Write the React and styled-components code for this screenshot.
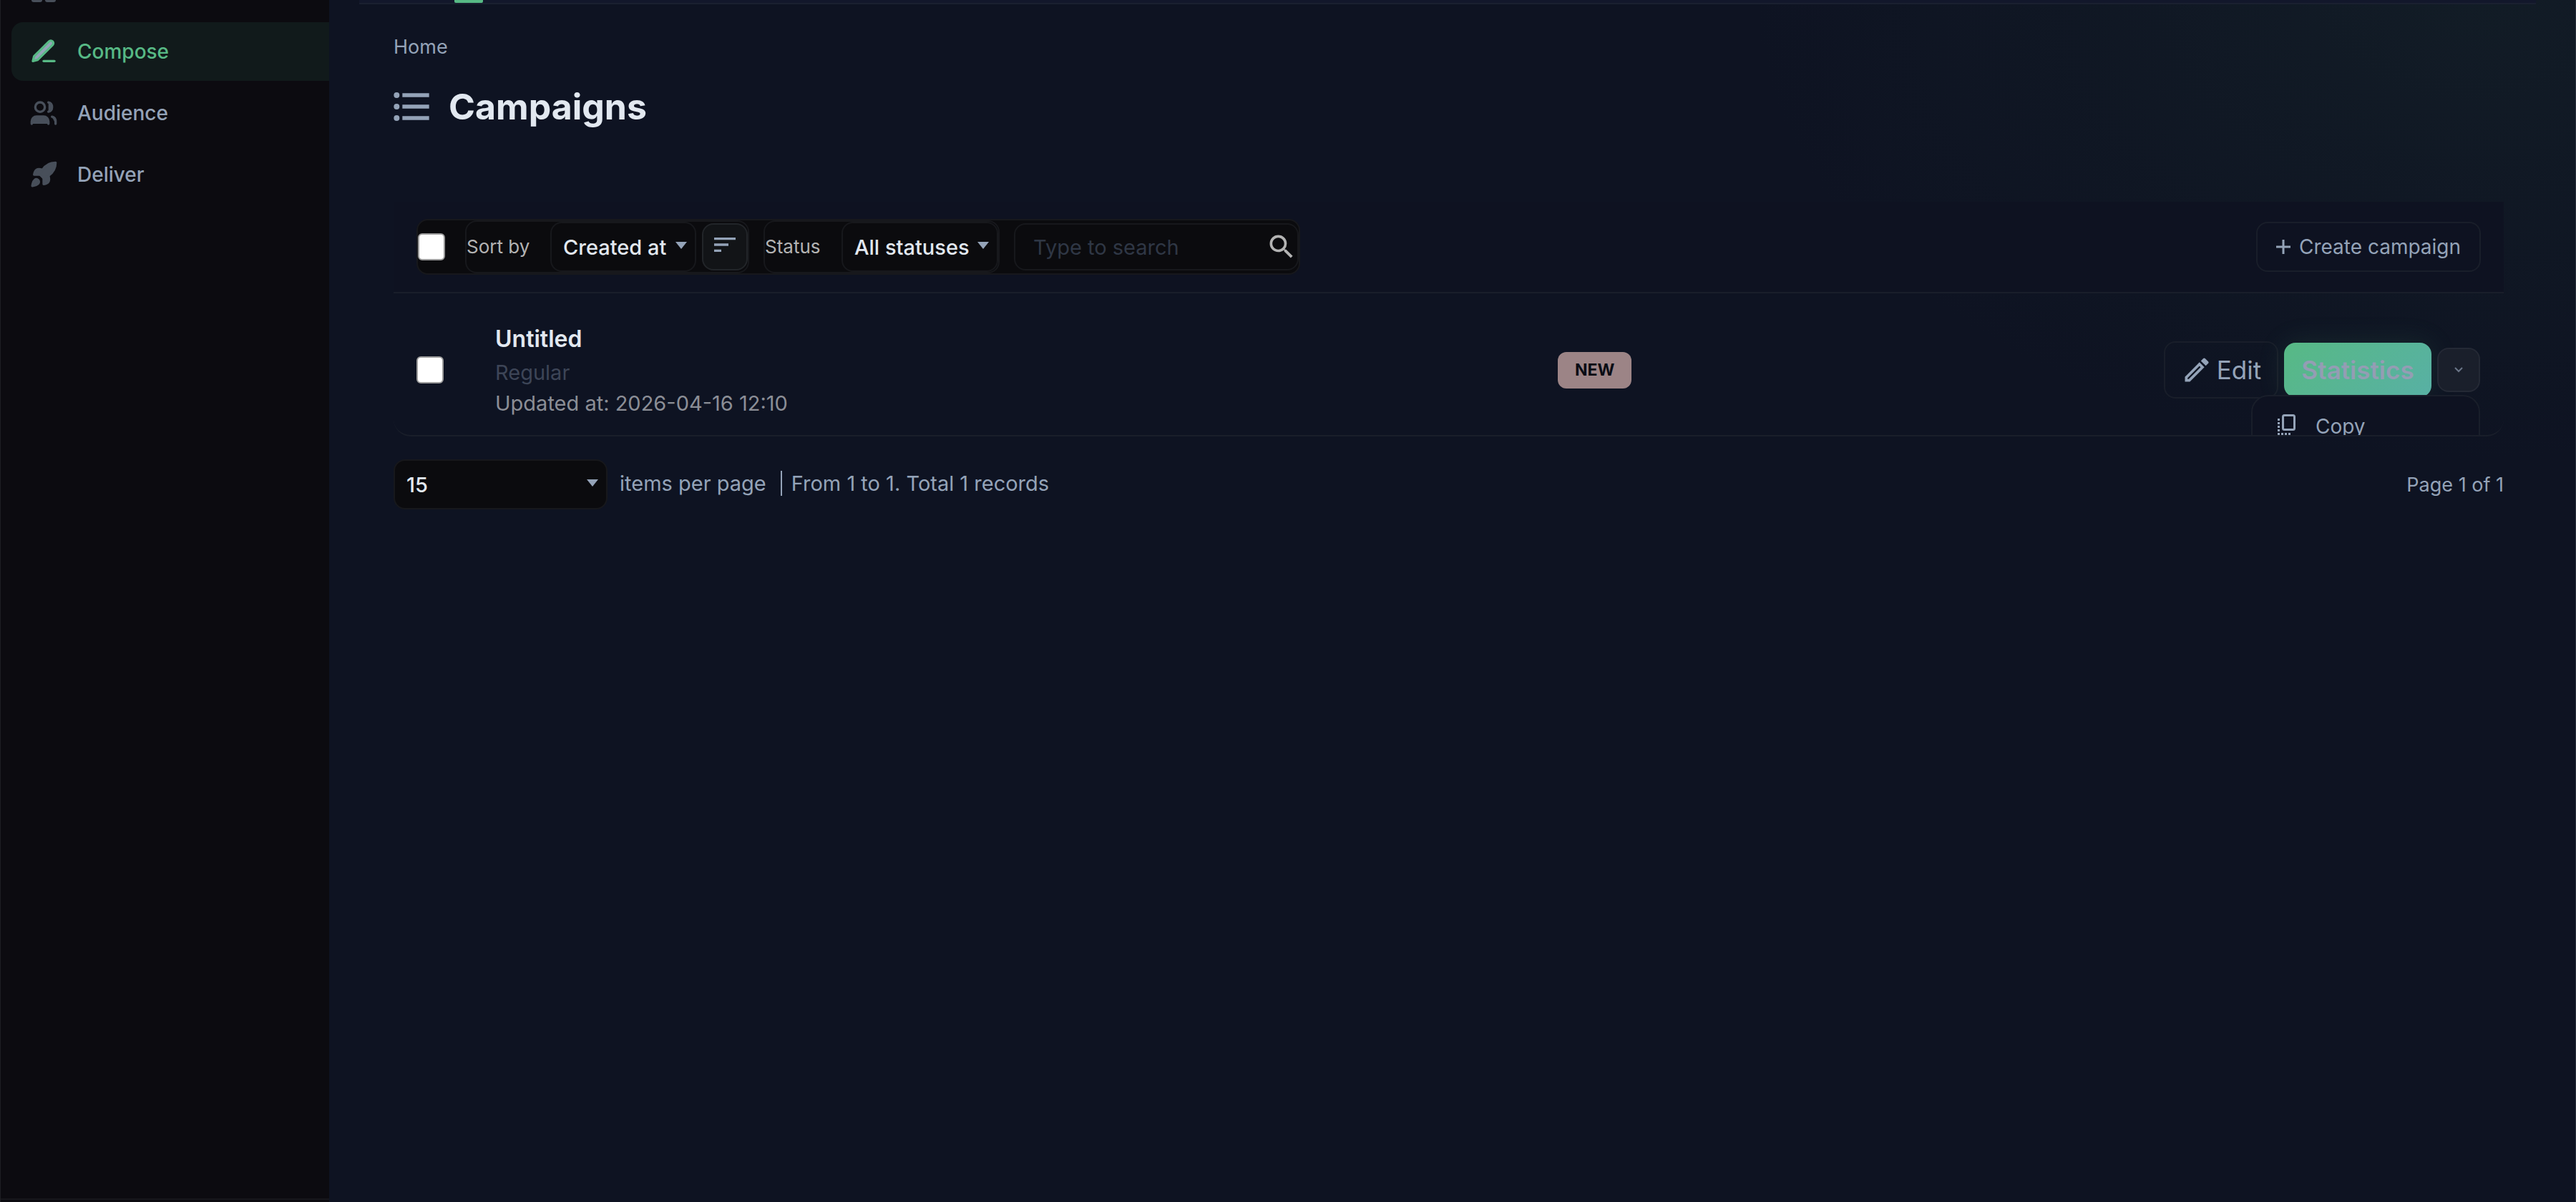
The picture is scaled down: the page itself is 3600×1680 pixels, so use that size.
import { MdOutlineEdit, MdSearch, MdSort } from 'react-icons/md'
import styled, { createGlobalStyle, ThemeProvider } from 'styled-components'

const theme = {
  colors: {
    page: '#0e1322',
    panel: '#0e1221',
    sidebar: '#0c0b10',
    field: '#0b0b0e',
    line: '#191e2a',
    fieldLine: '#17181c',
    text: '#e2e8f0',
    muted: '#94a3b8',
    neutral: '#b3b3b3',
    green: '#57b985',
  },
}

const GlobalStyle = createGlobalStyle`
  * {
    box-sizing: border-box;
  }
  body {
    margin: 0;
    background: ${theme.colors.page};
    color: ${theme.colors.muted};
    font-family: Inter, 'Liberation Sans', sans-serif;
    font-size: 29px;
  }
  button, input, select {
    font: inherit;
    margin: 0;
  }
`

const Layout = styled.div`
  display: flex;
  min-height: 100vh;
  border-right: 1px solid #2a303c;
  background: radial-gradient(ellipse 1000px 640px at 96% 0, #121c26, transparent);
`

const Sidebar = styled.nav`
  flex: 0 0 460px;
  padding-left: 15px;
  border-left: 1px solid #1e1f23;
  background: ${({ theme }) => theme.colors.sidebar};
  box-shadow: inset 0 -3px ${({ theme }) => theme.colors.sidebar}, inset 0 -5px #17171c;
`

const CutItem = styled.div`
  height: 31px;
  padding-left: 28px;

  svg {
    display: block;
  }
`

const NavLink = styled.a`
  display: flex;
  align-items: center;
  gap: 27px;
  height: 82px;
  margin-bottom: 4px;
  padding-left: 25px;
  border-radius: 16px 0 0 16px;
  font-size: 28px;
  font-weight: 500;
  text-decoration: none;
  color: ${({ theme, $active }) => ($active ? theme.colors.green : theme.colors.muted)};
  background: ${({ $active }) => ($active ? '#111a1b' : 'transparent')};

  svg {
    width: 40px;
    height: 40px;
    fill: ${({ theme, $active }) => ($active ? theme.colors.muted : '#484f5a')};
    stroke: ${({ theme, $active }) => ($active ? theme.colors.green : '#484f5a')};
    stroke-width: 2;
    stroke-linecap: round;
    stroke-linejoin: round;
  }
`

const Main = styled.main`
  flex: 1;
  min-width: 0;
  padding: 0 100px 0 90px;
`

const TopTabs = styled.div`
  height: 6px;
  margin: 0 -45px 0 -48px;
  padding-left: 133px;
  border-bottom: 2px solid #1a2030;
  background: #12172b;
`

const ActiveTab = styled.div`
  width: 40px;
  height: 4px;
  border-radius: 0 0 2px 2px;
  background: ${({ theme }) => theme.colors.green};
`

const Crumb = styled.a`
  display: block;
  width: max-content;
  margin-top: 42px;
  font-size: 27px;
  line-height: 36px;
  color: ${({ theme }) => theme.colors.muted};
  text-decoration: none;
`

const Heading = styled.div`
  display: flex;
  align-items: center;
  gap: 27px;
  margin: 32px 0 100px;

  h1 {
    margin: 0;
    font-size: 50px;
    font-weight: 700;
    line-height: 66px;
    color: ${({ theme }) => theme.colors.text};
  }
`

const Toolbar = styled.div`
  display: flex;
  justify-content: space-between;
  align-items: center;
  height: 128px;
  padding: 0 32px;
  border-bottom: 2px solid ${({ theme }) => theme.colors.line};
  background: ${({ theme }) => theme.colors.panel};
`

const FilterBar = styled.div`
  display: flex;
  align-items: center;
  height: 78px;
  border: 2px solid ${({ theme }) => theme.colors.fieldLine};
  border-radius: 16px;
  background: ${({ theme }) => theme.colors.field};
`

const Checkbox = styled.input.attrs({ type: 'checkbox' })`
  appearance: none;
  flex: none;
  width: 38px;
  height: 38px;
  border: 2px solid #9b9b9b;
  border-radius: 6px;
  background: #fff;
`

const FilterGroup = styled.div`
  display: flex;
  align-items: center;
  height: 74px;
  margin-left: ${({ $gap }) => $gap}px;
  border: 2px solid ${({ theme }) => theme.colors.fieldLine};
  border-radius: 16px;
`

const FilterLabel = styled.label`
  width: ${({ $width }) => $width}px;
  padding-bottom: 2px;
  font-size: 26px;
  color: ${({ theme }) => theme.colors.neutral};
`

const SelectBox = styled.div`
  position: relative;
  width: ${({ $width }) => $width}px;

  select {
    appearance: none;
    display: block;
    width: 100%;
    height: 70px;
    padding: 0 16px;
    border: 2px solid ${({ theme }) => theme.colors.fieldLine};
    border-radius: 16px;
    background: ${({ theme }) => theme.colors.field};
    color: ${({ theme }) => theme.colors.text};
    font-weight: 500;
  }

  svg {
    position: absolute;
    top: 28px;
    right: 13px;
    pointer-events: none;
    fill: ${({ theme }) => theme.colors.muted};
  }
`

const SortButton = styled.button`
  display: flex;
  align-items: center;
  justify-content: center;
  width: 64px;
  height: 66px;
  margin-left: 8px;
  padding: 0 0 6px;
  border: 2px solid #222529;
  border-radius: 16px;
  background: #121417;
  color: ${({ theme }) => theme.colors.muted};
`

const SearchBox = styled.label`
  display: flex;
  align-items: center;
  width: 398px;
  height: 66px;
  margin-left: 20px;
  border: 2px solid ${({ theme }) => theme.colors.fieldLine};
  border-radius: 16px;
  color: ${({ theme }) => theme.colors.neutral};

  input {
    flex: 1;
    min-width: 0;
    padding: 0 0 0 25px;
    border: 0;
    background: none;
    color: ${({ theme }) => theme.colors.text};
  }
  input::placeholder {
    color: #2f3745;
    opacity: 1;
  }
`

const OutlineButton = styled.button`
  display: flex;
  align-items: center;
  justify-content: center;
  gap: ${({ $large }) => ($large ? 6 : 12)}px;
  width: ${({ $large }) => ($large ? 160 : 314)}px;
  height: ${({ $large }) => ($large ? 80 : 70)}px;
  padding: 0;
  border: 2px solid ${({ theme }) => theme.colors.line};
  border-radius: 16px;
  background: transparent;
  color: ${({ theme }) => theme.colors.muted};
  font-size: ${({ $large }) => ($large ? 35 : 28)}px;
`

const Row = styled.article`
  position: relative;
  display: flex;
  align-items: center;
  height: 200px;
  padding: 16px 33px 0 32px;
  overflow: hidden;
  border-bottom: 2px solid ${({ theme }) => theme.colors.line};
  border-radius: 24px;
`

const Info = styled.div`
  flex: 1;
  margin-left: 72px;
  line-height: 43px;

  h2 {
    margin: 0;
    font-size: 32px;
    font-weight: 600;
    line-height: 50px;
    color: ${({ theme }) => theme.colors.text};
  }
  p {
    margin: 0;
  }
`

const Kind = styled.p`
  color: #3d4557;
`

const Updated = styled.p`
  color: #8b8e96;
`

const StatusCell = styled.div`
  flex: 0 0 847px;
`

const Badge = styled.span`
  display: inline-block;
  padding: 0 24px;
  border-radius: 12px;
  background: #9c8486;
  color: #090c14;
  font-size: 23px;
  font-weight: 700;
  line-height: 51px;
`

const Actions = styled.div`
  display: flex;
  align-items: center;
  gap: 8px;
`

const PrimaryButton = styled.button`
  width: 206px;
  height: 76px;
  padding: 0;
  border: 0;
  border-radius: 16px;
  background: linear-gradient(135deg, #57b985, #58b0a4);
  box-shadow: 0 0 40px rgba(87, 185, 133, 0.12);
  color: #949db4;
  font-size: 35px;
  font-weight: 600;
`

const ToggleButton = styled.button`
  display: flex;
  align-items: center;
  justify-content: center;
  width: 60px;
  height: 62px;
  padding: 0;
  border: 2px solid #242935;
  border-radius: 16px;
  background: #1a1f2b;
  color: #6b7688;
`

const Menu = styled.div`
  position: absolute;
  top: 142px;
  right: 33px;
  width: 320px;
  padding: 16px 0;
  border: 2px solid ${({ theme }) => theme.colors.line};
  border-radius: 24px;
  background: ${({ theme }) => theme.colors.panel};
`

const MenuItem = styled.button`
  display: flex;
  align-items: center;
  gap: 27px;
  width: 100%;
  height: 52px;
  padding: 0 35px;
  border: 0;
  background: none;
  color: ${({ theme }) => theme.colors.muted};
  font-size: 28px;
`

const Footer = styled.footer`
  display: flex;
  align-items: center;
  margin-top: 32px;
`

const Summary = styled.div`
  display: flex;
  align-items: center;
  padding: 0 0 4px 17px;
`

const Records = styled.span`
  margin-left: 20px;
  padding-left: 13px;
  border-left: 2px solid ${({ theme }) => theme.colors.muted};
`

const PageInfo = styled.span`
  margin-left: auto;
  font-size: 27px;
`

function Caret() {
  return (
    <svg width='16' height='10' viewBox='0 0 16 10'>
      <path d='M0 0h16L8 10z' />
    </svg>
  )
}

function ListIcon() {
  return (
    <svg width='50' height='40' viewBox='2.5 4.5 18.5 15' fill={theme.colors.muted}>
      <circle cx='4' cy='6' r='1.5' />
      <circle cx='4' cy='12' r='1.5' />
      <circle cx='4' cy='18' r='1.5' />
      <path d='M7 5h14v2H7zM7 11h14v2H7zM7 17h14v2H7z' />
    </svg>
  )
}

function CopyIcon() {
  return (
    <svg width='26' height='34' viewBox='0 0 26 34' fill='none' stroke='currentColor' strokeWidth='3'>
      <rect x='7.5' y='1.5' width='16' height='20' rx='2' />
      <path d='M1.500 6v23' strokeDasharray='3 2' />
      <path d='M5 27.500h14' strokeDasharray='3 2' />
    </svg>
  )
}

export default function App() {
  return (
    <ThemeProvider theme={theme}>
      <GlobalStyle />
      <Layout>
        <Sidebar>
          <CutItem>
            <svg width='34' height='3' fill='#484f5a'>
              <rect y='-12' width='15' height='15' rx='3' />
              <rect x='19' y='-12' width='15' height='15' rx='3' />
            </svg>
          </CutItem>
          <NavLink href='#compose' $active>
            <svg viewBox='0 0 24 24'>
              <path d='M12 20h9' />
              <path d='M16.500 3.500a2.120 2.120 0 0 1 3 3L7 19l-4 1 1-4z' />
            </svg>
            Compose
          </NavLink>
          <NavLink href='#audience'>
            <svg viewBox='0 0 24 24'>
              <path d='M16 21v-2a4 4 0 0 0-4-4H6a4 4 0 0 0-4 4v2' />
              <circle cx='9' cy='7' r='4' fill='none' />
              <path d='M22 21v-2a4 4 0 0 0-3-3.870' />
              <path d='M16 3.130a4 4 0 0 1 0 7.750' />
            </svg>
            Audience
          </NavLink>
          <NavLink href='#deliver'>
            <svg viewBox='0 0 24 24'>
              <path d='M4.500 16.500c-1.500 1.260-2 5-2 5s3.740-.5 5-2c.71-.84.7-2.130-.09-2.910a2.180 2.180 0 0 0-2.910-.09z' />
              <path d='m12 15-3-3a22 22 0 0 1 2-3.950A12.880 12.880 0 0 1 22 2c0 2.720-.78 7.500-6 11a22.350 22.350 0 0 1-4 2z' />
              <path d='M9 12H4s.55-3.030 2-4c1.620-1.080 5 0 5 0M12 15v5s3.030-.55 4-2c1.080-1.620 0-5 0-5' />
            </svg>
            Deliver
          </NavLink>
        </Sidebar>

        <Main>
          <TopTabs>
            <ActiveTab />
          </TopTabs>
          <Crumb href='#home'>Home</Crumb>
          <Heading>
            <ListIcon />
            <h1>Campaigns</h1>
          </Heading>

          <Toolbar>
            <FilterBar>
              <Checkbox aria-label='Select all' />
              <FilterGroup $gap={28}>
                <FilterLabel htmlFor='sort' $width={117}>Sort by</FilterLabel>
                <SelectBox $width={204}>
                  <select id='sort'>
                    <option>Created at</option>
                  </select>
                  <Caret />
                </SelectBox>
                <SortButton aria-label='Sort direction'>
                  <MdSort size={40} />
                </SortButton>
              </FilterGroup>
              <FilterGroup $gap={20}>
                <FilterLabel htmlFor='status' $width={107}>Status</FilterLabel>
                <SelectBox $width={219}>
                  <select id='status'>
                    <option>All statuses</option>
                  </select>
                  <Caret />
                </SelectBox>
              </FilterGroup>
              <SearchBox>
                <input type='text' placeholder='Type to search' aria-label='Search' />
                <MdSearch size={44} />
              </SearchBox>
            </FilterBar>
            <OutlineButton>
              <svg width='20' height='20' fill='none' stroke='currentColor' strokeWidth='3'>
                <path d='M10 0v20M0 10h20' />
              </svg>
              Create campaign
            </OutlineButton>
          </Toolbar>

          <Row>
            <Checkbox aria-label='Select Untitled' />
            <Info>
              <h2>Untitled</h2>
              <Kind>Regular</Kind>
              <Updated>Updated at: 2026-04-16 12:10</Updated>
            </Info>
            <StatusCell>
              <Badge>NEW</Badge>
            </StatusCell>
            <Actions>
              <OutlineButton $large>
                <MdOutlineEdit size={44} />
                Edit
              </OutlineButton>
              <PrimaryButton>Statistics</PrimaryButton>
              <ToggleButton aria-label='More actions'>
                <svg width='12' height='8' fill='none' stroke='currentColor' strokeWidth='2'>
                  <path d='M1 1l5 5 5-5' />
                </svg>
              </ToggleButton>
            </Actions>
            <Menu>
              <MenuItem>
                <CopyIcon />
                Copy
              </MenuItem>
            </Menu>
          </Row>

          <Footer>
            <SelectBox $width={299}>
              <select id='per-page'>
                <option>15</option>
              </select>
              <Caret />
            </SelectBox>
            <Summary>
              <label htmlFor='per-page'>items per page</label>
              <Records>From 1 to 1. Total 1 records</Records>
            </Summary>
            <PageInfo>Page 1 of 1</PageInfo>
          </Footer>
        </Main>
      </Layout>
    </ThemeProvider>
  )
}
